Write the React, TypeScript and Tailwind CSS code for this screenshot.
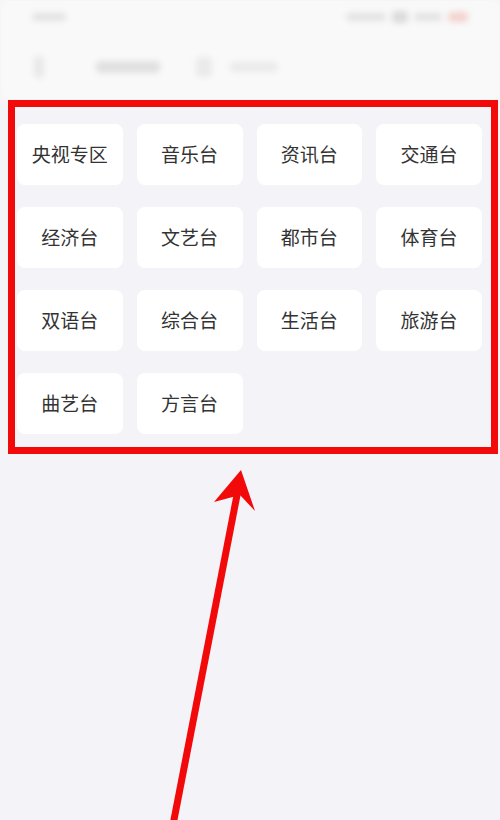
import React from 'react';

const channels = [
  '央视专区', '音乐台', '资讯台', '交通台',
  '经济台', '文艺台', '都市台', '体育台',
  '双语台', '综合台', '生活台', '旅游台',
  '曲艺台', '方言台',
];

const font = { fontFamily: '"Noto Sans CJK SC", "Noto Sans", sans-serif' };

function App() {
  return (
    <div className="relative w-[500px] h-[820px] overflow-hidden bg-[#f4f4f8]" style={font}>
      {/* blurred status bar + tabs */}
      <div className="bg-[#f9f9f9] h-[100px] blur-[3px]">
        <div className="flex items-center justify-between px-[32px] h-[34px]">
          <div className="w-[34px] h-[8px] rounded bg-[#e2e2e2]" />
          <div className="flex items-center gap-[6px]">
            <div className="w-[40px] h-[8px] rounded bg-[#e2e2e2]" />
            <div className="w-[16px] h-[12px] rounded bg-[#dadada]" />
            <div className="w-[28px] h-[8px] rounded bg-[#e2e2e2]" />
            <div className="w-[20px] h-[10px] rounded bg-[#f2d2cc]" />
          </div>
        </div>
        <div className="flex items-center h-[66px] pl-[34px]">
          <div className="w-[10px] h-[22px] rounded bg-[#e8e8e8]" />
          <div className="ml-[52px] w-[64px] h-[12px] rounded bg-[#e0e0e0]" />
          <div className="ml-[36px] w-[16px] h-[20px] rounded bg-[#eaeaea]" />
          <div className="ml-[18px] w-[48px] h-[10px] rounded bg-[#eaeaea]" />
        </div>
      </div>

      <div className="grid grid-cols-4 gap-x-[14px] gap-y-[22px] pl-[17px] pr-[18px] pt-[24px]">
        {channels.map((c) => (
          <div
            key={c}
            className="h-[61px] rounded-[8px] bg-white flex items-center justify-center text-[19px] text-[#333333]"
          >
            {c}
          </div>
        ))}
      </div>

      {/* annotation box */}
      <div className="absolute left-[8px] top-[100px] w-[490px] h-[354px] border-[7px] border-[#f20a0a] pointer-events-none" />

      {/* annotation arrow */}
      <svg className="absolute left-0 top-0 pointer-events-none" width="500" height="820" viewBox="0 0 500 820">
        <line x1="172" y1="830" x2="238" y2="490" stroke="#f20a0a" strokeWidth="7" />
        <polygon points="241,470 255,511 240,495 214,502" fill="#f20a0a" />
      </svg>
    </div>
  );
}

export default App;
